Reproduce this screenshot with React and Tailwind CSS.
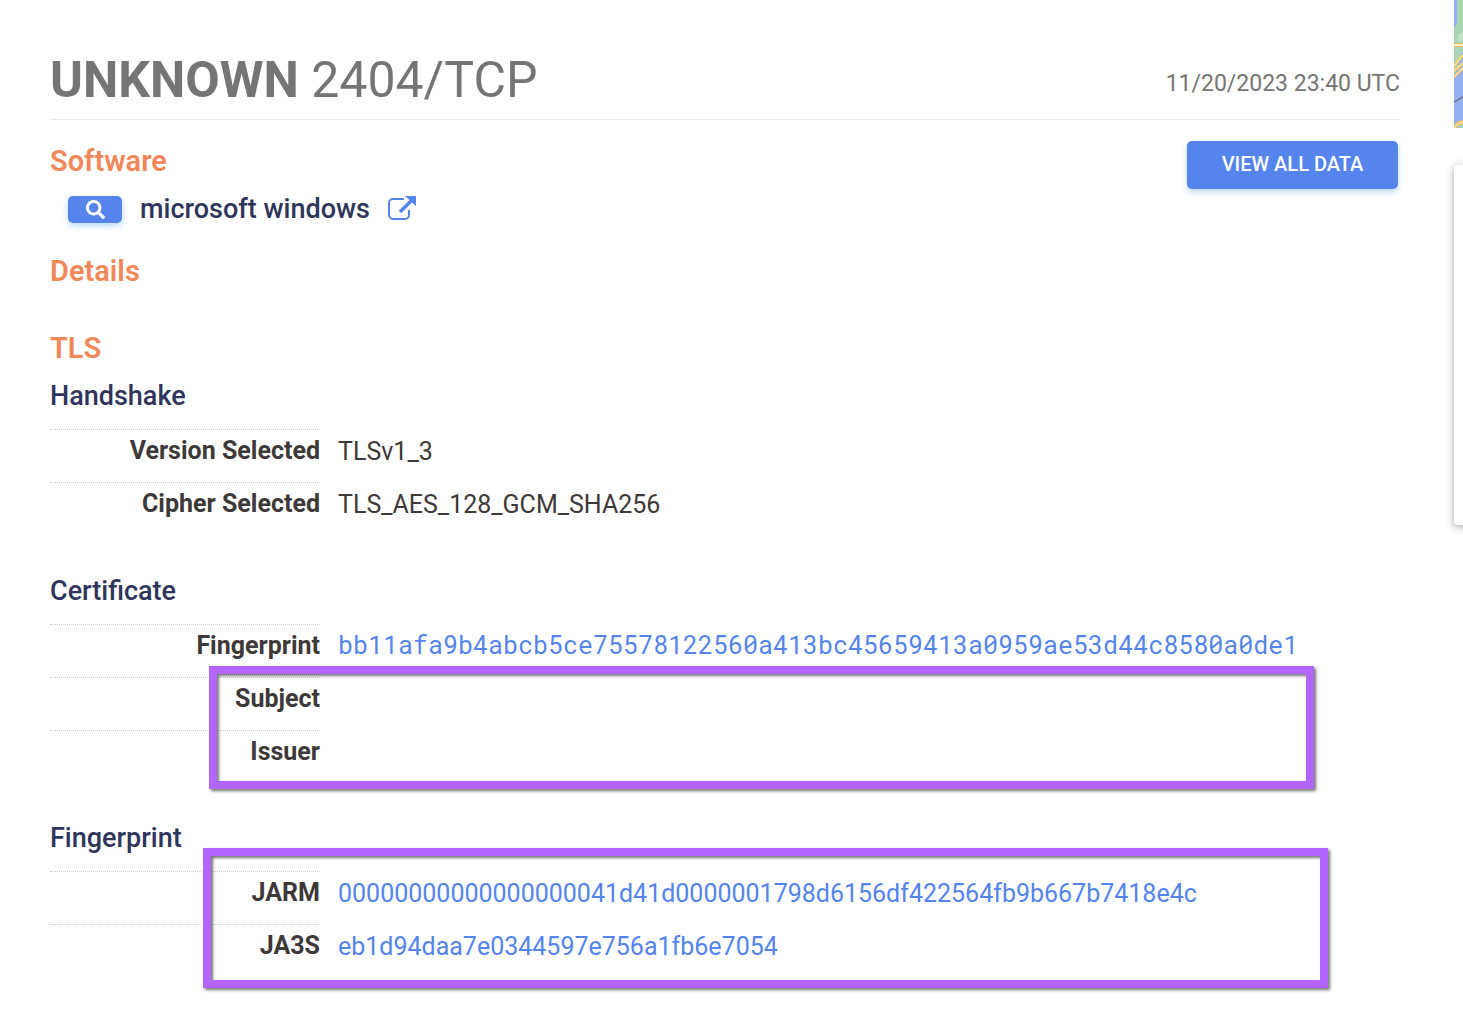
import React from 'react'
import { FaSearch } from 'react-icons/fa'

const handshake = [
  { label: 'Version Selected', value: 'TLSv1_3' },
  { label: 'Cipher Selected', value: 'TLS_AES_128_GCM_SHA256' },
]

const certificate = [
  {
    label: 'Fingerprint',
    value: 'bb11afa9b4abcb5ce75578122560a413bc45659413a0959ae53d44c8580a0de1',
    link: true,
    mono: true,
  },
  { label: 'Subject', value: '' },
  { label: 'Issuer', value: '' },
]

const fingerprint = [
  {
    label: 'JARM',
    value: '00000000000000000041d41d0000001798d6156df422564fb9b667b7418e4c',
    link: true,
  },
  { label: 'JA3S', value: 'eb1d94daa7e0344597e756a1fb6e7054', link: true },
]

function ExternalIcon() {
  return (
    <svg viewBox="0 0 28 24" className="h-6 w-7" fill="none" aria-hidden="true">
      <path
        d="M16 3H5a4 4 0 0 0-4 4v12a4 4 0 0 0 4 4h12a4 4 0 0 0 4-4v-5"
        stroke="#5484ec"
        strokeWidth="2"
      />
      <path d="M12 16 24 4" stroke="#5484ec" strokeWidth="3.6" />
      <path d="M17 0h11v10z" fill="#5484ec" />
    </svg>
  )
}

function SectionTitle({ children, className = '' }) {
  return (
    <h2 className={`text-[29px] leading-9 font-semibold text-[#f0885a] ${className}`}>
      {children}
    </h2>
  )
}

// Purple box drawn over the rows worth looking at
function Highlight({ className }) {
  return (
    <div
      className={`pointer-events-none absolute border-8 border-[#b266ff] shadow-[2px_2px_3px_rgba(0,0,0,0.55),inset_2px_2px_3px_rgba(0,0,0,0.55)] ${className}`}
    />
  )
}

function DataBlock({ title, rows, className, children }) {
  return (
    <section className={className}>
      <h3 className="text-[27px] leading-9 font-medium text-[#2f355b]">{title}</h3>
      <div className="relative mt-[15px]">
        <table className="w-full table-fixed border-separate border-spacing-0">
          <tbody>
            {rows.map((row) => (
              <tr key={row.label}>
                <th
                  scope="row"
                  className="h-[53px] w-[270px] border-t border-dotted border-[#cccccc] pt-[3px] text-right align-top text-[25px] leading-9 font-bold text-[#3e3939]"
                >
                  {row.label}
                </th>
                <td
                  className={`pl-[18px] align-top text-[25px] leading-9 ${
                    row.mono
                      ? "pt-[3px] font-['Roboto_Mono','Liberation_Mono',monospace]"
                      : 'pt-[5px]'
                  }`}
                >
                  {row.link ? (
                    <a href="#" className="text-[#5484ec]">
                      {row.value}
                    </a>
                  ) : (
                    row.value
                  )}
                </td>
              </tr>
            ))}
          </tbody>
        </table>
        {children}
      </div>
    </section>
  )
}

// Slice of the location map at the edge of the window
function MapEdge() {
  return (
    <svg
      viewBox="0 0 9 128"
      preserveAspectRatio="xMinYMin slice"
      className="h-32 w-full"
      aria-hidden="true"
    >
      <rect width="9" height="128" fill="#94b0f2" />
      <path d="M3 0h6v50L0 76V28l3-4z" fill="#a9d6b2" />
      <path d="M4 35l5-3v8l-5 2z" fill="#c2e2c6" />
      <path d="M0 45h9" stroke="#e8c06a" strokeWidth="4" />
      <path d="M0 45h9" stroke="#fff0c0" strokeWidth="2" />
      <path d="M0 66l9-11M0 71l9-8M0 77l9-9" stroke="#edc468" strokeWidth="3" />
      <path d="M0 66l9-11M0 71l9-8M0 77l9-9" stroke="#fff0c0" strokeWidth="1" />
      <path d="M0 102l9-5" stroke="#6b7287" strokeWidth="1.5" />
      <path d="M3 128l6-5v5z" fill="#a9d6b2" />
      <path d="M0 128q3-5 9-6" fill="none" stroke="#edc468" strokeWidth="4" />
      <path d="M0 128q3-5 9-6" fill="none" stroke="#fff0c0" strokeWidth="1" />
    </svg>
  )
}

export default function App() {
  return (
    <div className="flex min-h-screen overflow-hidden bg-white font-['Roboto',sans-serif] text-[#3e3939]">
      <main className="min-w-0 flex-1 pt-[50px] pr-[54px] pb-6 pl-[50px]">
        <header className="flex items-center justify-between border-b border-[#eaeaea] pb-[9px] text-[#757575]">
          <h1 className="text-[50px] leading-[60px] font-normal">
            <strong className="font-bold">UNKNOWN</strong> 2404/TCP
          </h1>
          <time dateTime="2023-11-20T23:40Z" className="pt-2 text-[23px]">
            11/20/2023 23:40 UTC
          </time>
        </header>

        <div className="flex items-start justify-between">
          <section className="pt-[23px]">
            <SectionTitle>Software</SectionTitle>
            <div className="mt-3 flex h-9 items-center pl-[18px]">
              <button
                type="button"
                aria-label="Search"
                className="flex h-[27px] w-[54px] items-center justify-center rounded-[5px] bg-[#5484ec] text-white shadow-[0_3px_6px_rgba(84,160,236,0.4)]"
              >
                <FaSearch className="size-[19px]" />
              </button>
              <span className="ml-[18px] text-[27px] leading-9 font-medium text-[#2f355b]">
                microsoft windows
              </span>
              <a href="#" aria-label="Open microsoft windows" className="ml-[18px] pb-0.5">
                <ExternalIcon />
              </a>
            </div>
          </section>
          <button
            type="button"
            className="mt-[21px] mr-0.5 h-12 w-[211px] rounded-[5px] bg-[#5484ec] pb-0.5 text-xl font-medium text-white shadow-[0_3px_6px_rgba(84,160,236,0.4)]"
          >
            VIEW ALL DATA
          </button>
        </div>

        <SectionTitle className="mt-[26px]">Details</SectionTitle>
        <SectionTitle className="mt-[41px]">TLS</SectionTitle>

        <DataBlock title="Handshake" rows={handshake} className="mt-3" />
        <DataBlock title="Certificate" rows={certificate} className="mt-[38px]">
          <Highlight className="top-[42px] right-[86px] left-[159px] h-[123px]" />
        </DataBlock>
        <DataBlock title="Fingerprint" rows={fingerprint} className="mt-[37px]">
          <Highlight className="top-[-23px] right-[72px] left-[153px] h-[140px]" />
        </DataBlock>
      </main>

      <aside className="w-[9px] shrink-0">
        <MapEdge />
        <div className="mt-[37px] h-[360px] w-10 rounded bg-white shadow-[0_2px_8px_rgba(0,0,0,0.35)]" />
      </aside>
    </div>
  )
}
